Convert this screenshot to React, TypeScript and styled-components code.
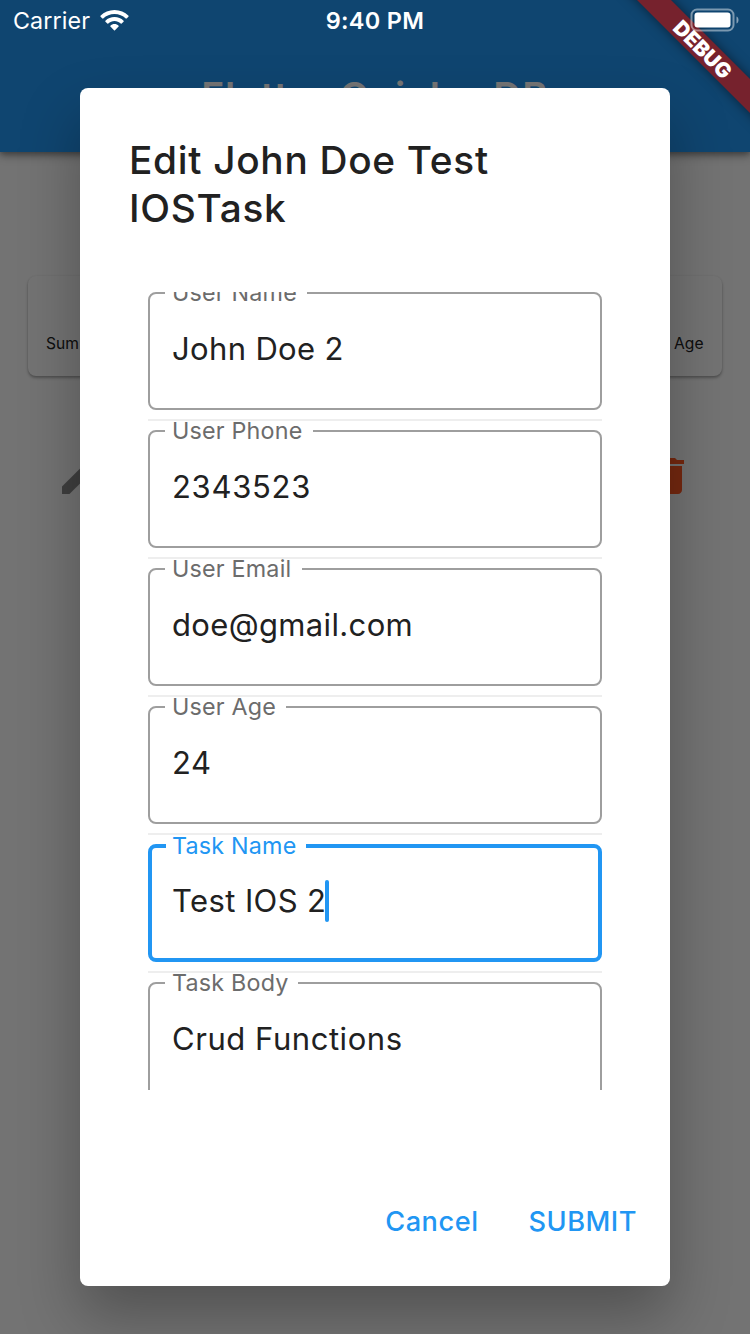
import React from "react";
import styled, { createGlobalStyle } from "styled-components";

const Global = createGlobalStyle`
  * { box-sizing: border-box; }
  html, body { margin: 0; padding: 0; }
  body { width: 750px; height: 1334px; overflow: hidden; font-family: "Inter", "Liberation Sans", sans-serif; }
`;

const Screen = styled.div`
  position: relative;
  width: 750px;
  height: 1334px;
  overflow: hidden;
  background: #fafafa;
`;

const Page = styled.div`
  display: flex;
  flex-direction: column;
  height: 100%;
`;

const AppBar = styled.header`
  display: flex;
  justify-content: center;
  height: 152px;
  padding-top: 72px;
  background: #2196f3;
  box-shadow: 0 4px 8px rgba(0, 0, 0, 0.36), 0 2px 4px rgba(0, 0, 0, 0.15);
`;

const AppTitle = styled.h1`
  margin: 0;
  font-size: 38.8px;
  font-weight: 600;
  line-height: 48px;
  letter-spacing: 0.95px;
  color: #fff;
`;

const SummaryCard = styled.section`
  display: flex;
  justify-content: space-between;
  align-items: flex-start;
  height: 100px;
  margin: 124px 28px 0;
  padding: 58px 18.5px 0 18px;
  border-radius: 8px;
  background: #fbfbfb;
  font-size: 15.6px;
  line-height: 20px;
  color: #212121;
  box-shadow: 0 2px 3px rgba(0, 0, 0, 0.3), 0 0 2px rgba(0, 0, 0, 0.08);
`;

const TaskRow = styled.div`
  display: flex;
  justify-content: space-between;
  margin: 76px 56px 0 56px;
`;

const TaskIcon = styled.svg<{ $color: string }>`
  width: 48px;
  height: 48px;
  fill: ${(p) => p.$color};
`;

const Scrim = styled.div`
  position: absolute;
  inset: 0;
  display: flex;
  align-items: flex-start;
  padding: 88px 80px 0;
  background: rgba(0, 0, 0, 0.54);
`;

const Dialog = styled.div`
  display: flex;
  flex-direction: column;
  width: 590px;
  height: 1198px;
  padding: 48px 0 0;
  border-radius: 8px;
  background: #fff;
  box-shadow: 0 30px 60px rgba(0, 0, 0, 0.29);
`;

const DialogTitle = styled.h2`
  margin: 0 48px 0 49px;
  font-size: 38.8px;
  font-weight: 500;
  line-height: 48px;
  letter-spacing: 0.7px;
  color: #212121;
`;

const Form = styled.div`
  height: 798px;
  margin: 60px 68px 0;
  overflow: hidden;
`;

const Field = styled.div<{ $active?: boolean }>`
  position: relative;
  height: 118px;
  padding: ${(p) => (p.$active ? "33px 20px" : "35px 22px")};
  border: ${(p) => (p.$active ? "4px solid #2196f3" : "2px solid #9e9e9e")};
  border-radius: 8px;
`;

const FieldLabel = styled.label<{ $active?: boolean; $gap: number }>`
  position: absolute;
  top: ${(p) => (p.$active ? -16 : -15)}px;
  left: ${(p) => (p.$active ? 14 : 15)}px;
  width: ${(p) => p.$gap}px;
  height: 28px;
  padding-left: ${(p) => (p.$active ? 6 : 7)}px;
  background: linear-gradient(#fff, #fff) center / 100% 8px no-repeat;
  font-size: 23.3px;
  line-height: 28px;
  letter-spacing: 0.2px;
  white-space: nowrap;
  color: ${(p) => (p.$active ? "#2196f3" : "#6c6c6c")};
`;

const FieldValue = styled.div<{ $tracking: number }>`
  display: flex;
  align-items: center;
  height: 40px;
  font-size: 31px;
  line-height: 40px;
  letter-spacing: ${(p) => p.$tracking}px;
  white-space: nowrap;
  color: #212121;
`;

const Caret = styled.span`
  width: 4px;
  height: 42px;
  margin-left: -1px;
  border-radius: 2px;
  background: #2196f3;
`;

const Divider = styled.div`
  height: 2px;
  margin: 9px 0;
  background: #eeeeee;
`;

const Actions = styled.div`
  display: flex;
  justify-content: flex-end;
  gap: 50px;
  margin-top: 114px;
  padding-right: 33px;
`;

const TextButton = styled.button`
  padding: 0;
  border: 0;
  background: none;
  font: 500 27.2px/36px "Inter", "Liberation Sans", sans-serif;
  letter-spacing: 0.5px;
  color: #2196f3;
`;

const RibbonLayer = styled.div`
  position: absolute;
  top: 0;
  right: 0;
  width: 150px;
  height: 150px;
  overflow: hidden;
`;

const Ribbon = styled.div`
  position: absolute;
  top: 36px;
  left: -3px;
  width: 210px;
  height: 24px;
  display: flex;
  align-items: center;
  justify-content: center;
  padding-left: 3px;
  transform: rotate(45deg);
  background: #76222d;
  box-shadow: 0 0 12px rgba(0, 0, 0, 0.5);
  font-size: 20.8px;
  font-weight: 900;
  color: #fff;
`;

const StatusBar = styled.div`
  position: absolute;
  top: 1px;
  left: 0;
  width: 750px;
  height: 40px;
  display: grid;
  grid-template-columns: 1fr auto 1fr;
  align-items: center;
  padding: 0 11px 0 13px;
  color: #fff;
`;

const Carrier = styled.div`
  display: flex;
  align-items: center;
  gap: 10px;
  font-size: 23.3px;
  line-height: 40px;
  letter-spacing: 0.1px;
`;

const WifiIcon = styled.svg`
  width: 29px;
  height: 21px;
  margin-top: -1px;
  fill: #fff;
`;

const Clock = styled.div`
  margin-left: -2px;
  font-size: 23.5px;
  font-weight: 600;
  line-height: 40px;
  letter-spacing: 0.3px;
`;

const Battery = styled.svg`
  justify-self: end;
  width: 49px;
  height: 24px;
  margin-top: -3px;
`;

const fields = [
  { label: "User Name", value: "John Doe 2", gap: 142, tracking: 0.35 },
  { label: "User Phone", value: "2343523", gap: 148, tracking: 0.7 },
  { label: "User Email", value: "doe@gmail.com", gap: 137, tracking: 0.35 },
  { label: "User Age", value: "24", gap: 121, tracking: 0.5 },
  { label: "Task Name", value: "Test IOS 2", gap: 140, tracking: 0.4, active: true },
  { label: "Task Body", value: "Crud Functions", gap: 133, tracking: 0.55 },
];

export default function App() {
  return (
    <Screen>
      <Global />
      <Page>
        <AppBar>
          <AppTitle>Flutter Quick - DB</AppTitle>
        </AppBar>
        <SummaryCard>
          <span>Sum</span>
          <span>Age</span>
        </SummaryCard>
        <TaskRow>
          <TaskIcon $color="#8a8a8a" viewBox="0 0 24 24">
            <path d="M3 17.25V21h3.75L17.81 9.94l-3.75-3.75L3 17.25z" />
          </TaskIcon>
          <TaskIcon $color="#ff5722" viewBox="0 0 24 24">
            <path d="M6 19c0 1.1.9 2 2 2h8c1.1 0 2-.9 2-2V7H6v12zM19 4h-3.5l-1-1h-5l-1 1H5v2h14V4z" />
          </TaskIcon>
        </TaskRow>
      </Page>
      <Scrim>
        <Dialog>
          <DialogTitle>Edit John Doe Test IOSTask</DialogTitle>
          <Form>
            {fields.map((f, i) => (
              <React.Fragment key={f.label}>
                {i > 0 && <Divider />}
                <Field $active={f.active}>
                  <FieldLabel $active={f.active} $gap={f.gap}>{f.label}</FieldLabel>
                  <FieldValue $tracking={f.tracking}>
                    {f.value}
                    {f.active && <Caret />}
                  </FieldValue>
                </Field>
              </React.Fragment>
            ))}
          </Form>
          <Actions>
            <TextButton>Cancel</TextButton>
            <TextButton>SUBMIT</TextButton>
          </Actions>
        </Dialog>
      </Scrim>
      <RibbonLayer>
        <Ribbon>DEBUG</Ribbon>
      </RibbonLayer>
      <StatusBar>
        <Carrier>
          Carrier
          <WifiIcon viewBox="0 0 30 22">
            <path d="M15 0C9.300 0 4.100 2.200.300 5.900c-.3.300-.3.700 0 1l1.900 1.900c.3.300.7.300 1 0C6.300 5.800 10.400 4.100 15 4.100s8.700 1.700 11.800 4.700c.3.300.7.300 1 0l1.900-1.900c.3-.3.300-.7 0-1C25.900 2.200 20.700 0 15 0z" />
            <path d="M15 7.400c-3.700 0-7 1.400-9.500 3.800-.3.300-.3.700 0 1l2 2c.3.300.7.300 1 0 1.700-1.700 4-2.700 6.500-2.700s4.800 1 6.500 2.700c.3.300.7.300 1 0l2-2c.3-.3.300-.7 0-1C22 8.800 18.700 7.400 15 7.400z" />
            <path d="M15 14.700c-1.700 0-3.200.6-4.300 1.700-.3.300-.3.700 0 1l3.800 3.900c.3.300.7.300 1 0l3.800-3.900c.3-.3.300-.7 0-1-1.100-1.100-2.600-1.700-4.300-1.700z" />
          </WifiIcon>
        </Carrier>
        <Clock>9:40 PM</Clock>
        <Battery viewBox="0 0 49 24">
          <rect x="1.500" y="1.500" width="42" height="21" rx="5.500" fill="none" stroke="#fff" strokeOpacity=".45" strokeWidth="2" />
          <rect x="4.500" y="4.500" width="36" height="15" rx="3" fill="#fff" />
          <path d="M46.500 8.500c1.500.6 2 2 2 3.500s-.5 2.900-2 3.500z" fill="#fff" fillOpacity=".5" />
        </Battery>
      </StatusBar>
    </Screen>
  );
}
